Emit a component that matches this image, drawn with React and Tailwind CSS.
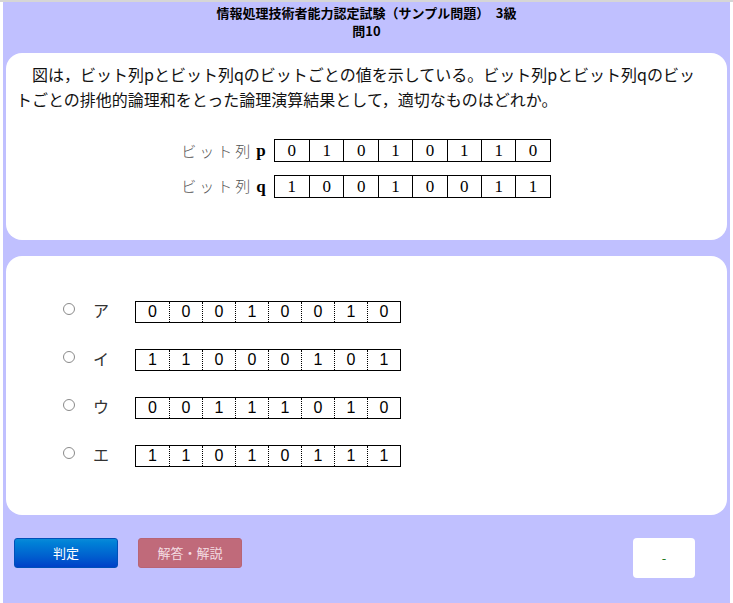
const topRows = [
  { label: "p", bits: [0, 1, 0, 1, 0, 1, 1, 0] },
  { label: "q", bits: [1, 0, 0, 1, 0, 0, 1, 1] },
];

const options = [
  { kana: "ア", bits: [0, 0, 0, 1, 0, 0, 1, 0] },
  { kana: "イ", bits: [1, 1, 0, 0, 0, 1, 0, 1] },
  { kana: "ウ", bits: [0, 0, 1, 1, 1, 0, 1, 0] },
  { kana: "エ", bits: [1, 1, 0, 1, 0, 1, 1, 1] },
];

const sans = "font-['Noto_Sans_CJK_JP','Noto_Sans',sans-serif]";

const App = () => {
  return (
    <div className={`min-h-[603px] border-t-2 border-[#d6d6d6] bg-white px-[3px] ${sans}`}>
      <div className="min-h-[601px] bg-[#c0c0ff] px-[3px] pb-6">
        <div className="flex flex-col items-center pt-[2px] text-[13px] font-bold leading-[18px] text-black">
          <p>情報処理技術者能力認定試験（サンプル問題）　3級</p>
          <p>問10</p>
        </div>

        <section className="mt-[13px] h-[187px] rounded-[16px] bg-white pl-[10px] pr-[20px] pt-[9px]">
          <p className="indent-[1em] text-[16px] leading-[25px] text-[#111]">
            図は，ビット列pとビット列qのビットごとの値を示している。ビット列pとビット列qのビットごとの排他的論理和をとった論理演算結果として，適切なものはどれか。
          </p>
          <div className="mt-[26px] flex flex-col items-center gap-[10px] pl-[9px]">
            {topRows.map((row) => (
              <div key={row.label} className="flex items-center">
                <span className="mr-[3px] text-[15px] tracking-[3px] text-[#555] font-['Noto_Sans_CJK_JP',sans-serif] font-light">
                  ビット列
                </span>
                <span className="mr-[8px] font-['Liberation_Serif',serif] text-[17px] font-bold text-black">
                  {row.label}
                </span>
                <div className="flex border border-black">
                  {row.bits.map((b, i) => (
                    <span
                      key={i}
                      className={`flex h-[21px] w-[34.4px] items-center justify-center font-['Liberation_Serif',serif] text-[17px] text-black ${
                        i > 0 ? "border-l border-black" : ""
                      }`}
                    >
                      {b}
                    </span>
                  ))}
                </div>
              </div>
            ))}
          </div>
        </section>

        <section className="mt-[16px] h-[259px] rounded-[16px] bg-white pl-[56px] pt-[45px]">
          <div className="flex flex-col gap-[26px]">
            {options.map((opt) => (
              <div key={opt.kana} className="flex h-[22px] items-center">
                <span className="mb-[6px] ml-[1px] h-[12px] w-[12px] rounded-full border border-[#8a8a8a] bg-white" />
                <span className="mb-[5px] ml-[18px] w-[42px] text-[16px] leading-[20px] text-[#333]">{opt.kana}</span>
                <div className="flex border border-black">
                  {opt.bits.map((b, i) => (
                    <span
                      key={i}
                      className={`flex h-[20px] w-[33px] items-center justify-center font-['Liberation_Sans',sans-serif] text-[16px] text-black ${
                        i > 0 ? "border-l border-dotted border-black" : ""
                      }`}
                    >
                      {b}
                    </span>
                  ))}
                </div>
              </div>
            ))}
          </div>
        </section>

        <div className="mt-[23px] flex items-start pl-[8px] pr-[32px]">
          <button
            type="button"
            className="h-[30px] w-[104px] rounded-[3px] border border-[#0050b8] bg-gradient-to-b from-[#0a8ad8] to-[#0040c8] text-[13px] text-white"
          >
            判定
          </button>
          <button
            type="button"
            className="ml-[20px] h-[30px] w-[104px] rounded-[3px] border border-[#b86476] bg-[#c06a7a] text-[13px] text-[#f4dde3]"
          >
            解答・解説
          </button>
          <div className="ml-auto flex h-[40px] w-[62px] items-center justify-center rounded-[4px] bg-white text-[13px] text-[#1a7a1a]">
            -
          </div>
        </div>
      </div>
    </div>
  );
};

export default App;
